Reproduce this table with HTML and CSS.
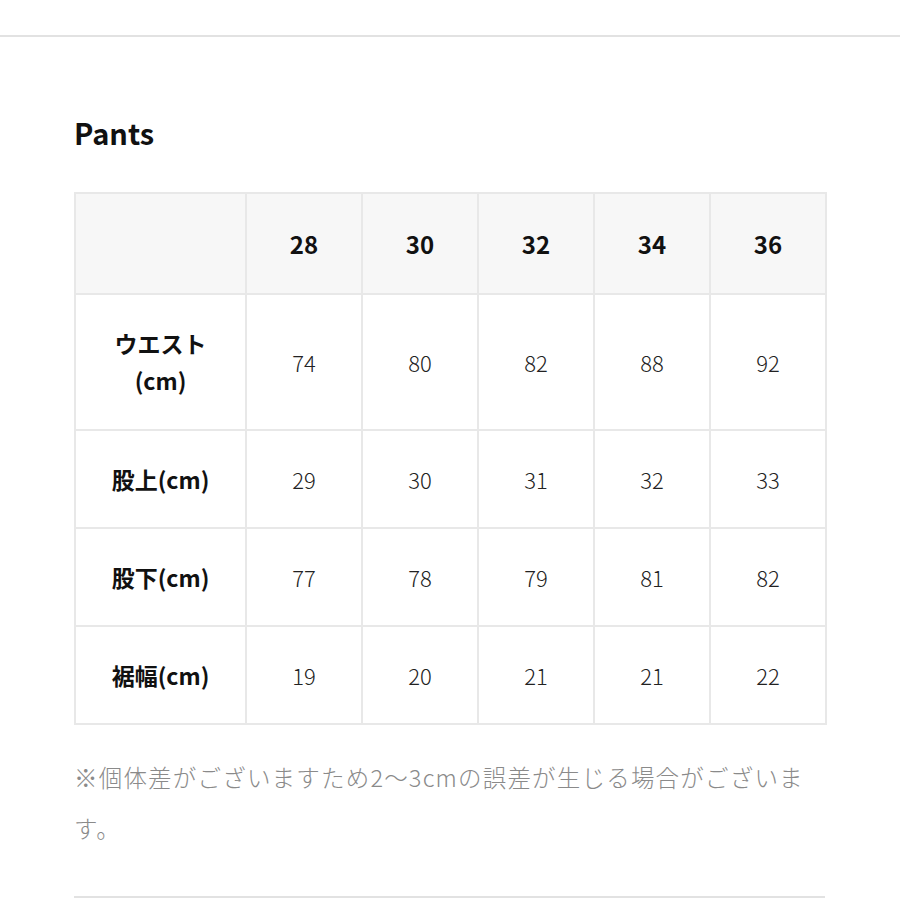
FILE: index.html
```html
<!DOCTYPE html>
<html lang="ja">
<head>
<meta charset="utf-8">
<link rel="stylesheet" href="styles.css">
</head>
<body>
<div class="topline"></div>
<main class="content">
  <h2 class="title">Pants</h2>
  <table class="size">
    <colgroup>
      <col class="c-label"><col class="c-val"><col class="c-val"><col class="c-val"><col class="c-val"><col class="c-val">
    </colgroup>
    <tr class="head">
      <th></th><th>28</th><th>30</th><th>32</th><th>34</th><th>36</th>
    </tr>
    <tr class="r-tall">
      <th>ウエスト<br>(cm)</th><td>74</td><td>80</td><td>82</td><td>88</td><td>92</td>
    </tr>
    <tr class="r">
      <th>股上(cm)</th><td>29</td><td>30</td><td>31</td><td>32</td><td>33</td>
    </tr>
    <tr class="r">
      <th>股下(cm)</th><td>77</td><td>78</td><td>79</td><td>81</td><td>82</td>
    </tr>
    <tr class="r">
      <th>裾幅(cm)</th><td>19</td><td>20</td><td>21</td><td>21</td><td>22</td>
    </tr>
  </table>
  <p class="note">※個体差がございますため2〜3cmの誤差が生じる場合がございます。</p>
  <div class="bottomline"></div>
</main>
</body>
</html>
```
FILE: styles.css
```css
html, body {
  margin: 0;
  padding: 0;
  background: #fff;
}
body {
  font-family: "Noto Sans CJK JP", "Noto Sans", sans-serif;
  color: #1a1a1a;
}
.topline {
  margin-top: 35px;
  height: 2px;
  background: #e2e2e2;
}
.content {
  width: 751px;
  margin-left: 74px;
}
.title {
  margin: 74px 0 0;
  font-size: 29px;
  font-weight: 700;
  line-height: 42px;
  color: #111;
}
.size {
  margin-top: 39px;
  border-collapse: collapse;
  width: 751px;
  table-layout: fixed;
}
.c-label { width: 171px; }
.c-val { width: 116px; }
.size th, .size td {
  border: 2px solid #e8e8e8;
  text-align: center;
  vertical-align: middle;
  padding: 0;
  line-height: 37px;
}
.size th {
  font-size: 23px;
  font-weight: 700;
  color: #111;
}
.size td {
  font-size: 22px;
  font-weight: 300;
  color: #222;
}
.head th {
  background: #f7f7f7;
  font-size: 24px;
  height: 99px;
}
.r-tall th, .r-tall td { height: 134px; }
.r th, .r td { height: 96px; }
.note {
  margin: 27px 0 0;
  font-size: 23.5px;
  font-weight: 300;
  letter-spacing: 1.2px;
  line-height: 51px;
  color: #8a8a8a;
}
.bottomline {
  margin-top: 42px;
  height: 2px;
  background: #e2e2e2;
}
```
